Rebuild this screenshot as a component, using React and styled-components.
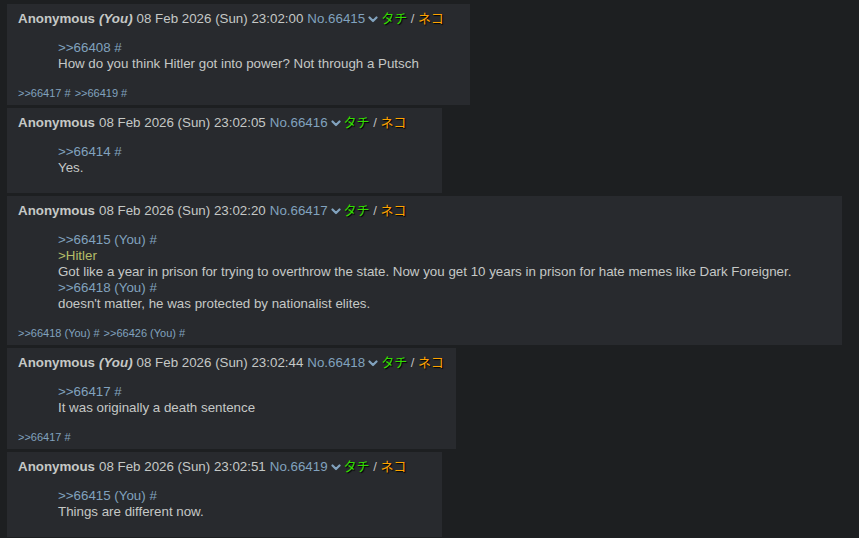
import React from "react";
import styled, { createGlobalStyle } from "styled-components";

const GlobalStyle = createGlobalStyle`
  html, body {
    margin: 0;
    padding: 0;
    background-color: #1d1f21;
  }
  body {
    font-family: "Liberation Sans", Arial, sans-serif;
    font-size: 13.33px;
    color: #c5c8c6;
  }
`;

const Thread = styled.div`
  width: 859px;
  height: 538px;
  overflow: hidden;
  padding: 4px 0 0 7px;
  box-sizing: border-box;
  display: flex;
  flex-direction: column;
  align-items: flex-start;
  gap: 3px;
`;

const Post = styled.div`
  width: ${(p) => p.$width}px;
  box-sizing: border-box;
  background-color: #282a2e;
  padding: 7px 4px 4px 11px;
  flex-shrink: 0;
`;

const PostInfo = styled.div`
  display: flex;
  align-items: center;
  line-height: 16px;
  white-space: nowrap;
`;

const Name = styled.span`
  font-weight: 700;
  color: #c5c8c6;
`;

const You = styled.em`
  font-weight: 700;
  color: #c5c8c6;
  margin-left: 4px;
`;

const DateTime = styled.span`
  margin-left: 4px;
`;

const PostNum = styled.span`
  margin-left: 4px;
  color: #81a2be;
`;

const MenuButton = styled.span`
  display: inline-flex;
  align-items: center;
  margin-left: 3px;
  width: 10px;
  height: 16px;
`;

const Flair = styled.span`
  margin-left: 3px;
  font-family: "Liberation Sans", "Noto Sans CJK JP", sans-serif;
  font-size: 13px;
  color: #bfbfbf;
`;

const Tachi = styled.span`
  color: #33dd00;
  text-shadow: 1px 1px 1px #000;
`;

const Neko = styled.span`
  color: #ffa200;
  text-shadow: 1px 1px 1px #000;
`;

const Body = styled.blockquote`
  margin: 13px 40px 13px 40px;
  line-height: 16px;
`;

const Line = styled.div`
  color: ${(p) => (p.$green ? "#b5bd68" : p.$link ? "#81a2be" : "#c5c8c6")};
`;

const Backlinks = styled.div`
  font-size: 11px;
  line-height: 16px;
  color: #81a2be;
  margin-top: 1px;
`;

const Backlink = styled.span`
  margin-right: 4px;
`;

const Chevron = () => (
  <svg width="10" height="7" viewBox="0 0 10 7">
    <path
      d="M1.5 1.5 L5 5 L8.5 1.5"
      fill="none"
      stroke="#81a2be"
      strokeWidth="2.2"
      strokeLinecap="round"
      strokeLinejoin="round"
    />
  </svg>
);

const posts = [
  {
    width: 463,
    you: true,
    time: "23:02:00",
    no: "66415",
    lines: [
      { link: true, text: ">>66408 #" },
      { text: "How do you think Hitler got into power? Not through a Putsch" },
    ],
    backlinks: [">>66417 #", ">>66419 #"],
  },
  {
    width: 435,
    time: "23:02:05",
    no: "66416",
    lines: [{ link: true, text: ">>66414 #" }, { text: "Yes." }],
  },
  {
    width: 835,
    time: "23:02:20",
    no: "66417",
    lines: [
      { link: true, text: ">>66415 (You) #" },
      { green: true, text: ">Hitler" },
      {
        text: "Got like a year in prison for trying to overthrow the state. Now you get 10 years in prison for hate memes like Dark Foreigner.",
      },
      { link: true, text: ">>66418 (You) #" },
      { text: "doesn't matter, he was protected by nationalist elites." },
    ],
    backlinks: [">>66418 (You) #", ">>66426 (You) #"],
  },
  {
    width: 449,
    you: true,
    time: "23:02:44",
    no: "66418",
    lines: [
      { link: true, text: ">>66417 #" },
      { text: "It was originally a death sentence" },
    ],
    backlinks: [">>66417 #"],
  },
  {
    width: 435,
    time: "23:02:51",
    no: "66419",
    lines: [
      { link: true, text: ">>66415 (You) #" },
      { text: "Things are different now." },
    ],
  },
];

const App = () => {
  return (
    <>
      <GlobalStyle />
      <Thread>
        {posts.map((post) => (
          <Post key={post.no} $width={post.width}>
            <PostInfo>
              <Name>Anonymous</Name>
              {post.you && <You>(You)</You>}
              <DateTime>08 Feb 2026 (Sun) {post.time}</DateTime>
              <PostNum>No.{post.no}</PostNum>
              <MenuButton>
                <Chevron />
              </MenuButton>
              <Flair>
                <Tachi>タチ</Tachi> / <Neko>ネコ</Neko>
              </Flair>
            </PostInfo>
            <Body>
              {post.lines.map((l, i) => (
                <Line key={i} $link={l.link} $green={l.green}>
                  {l.text}
                </Line>
              ))}
            </Body>
            {post.backlinks && (
              <Backlinks>
                {post.backlinks.map((b) => (
                  <Backlink key={b}>{b}</Backlink>
                ))}
              </Backlinks>
            )}
          </Post>
        ))}
      </Thread>
    </>
  );
};

export default App;
